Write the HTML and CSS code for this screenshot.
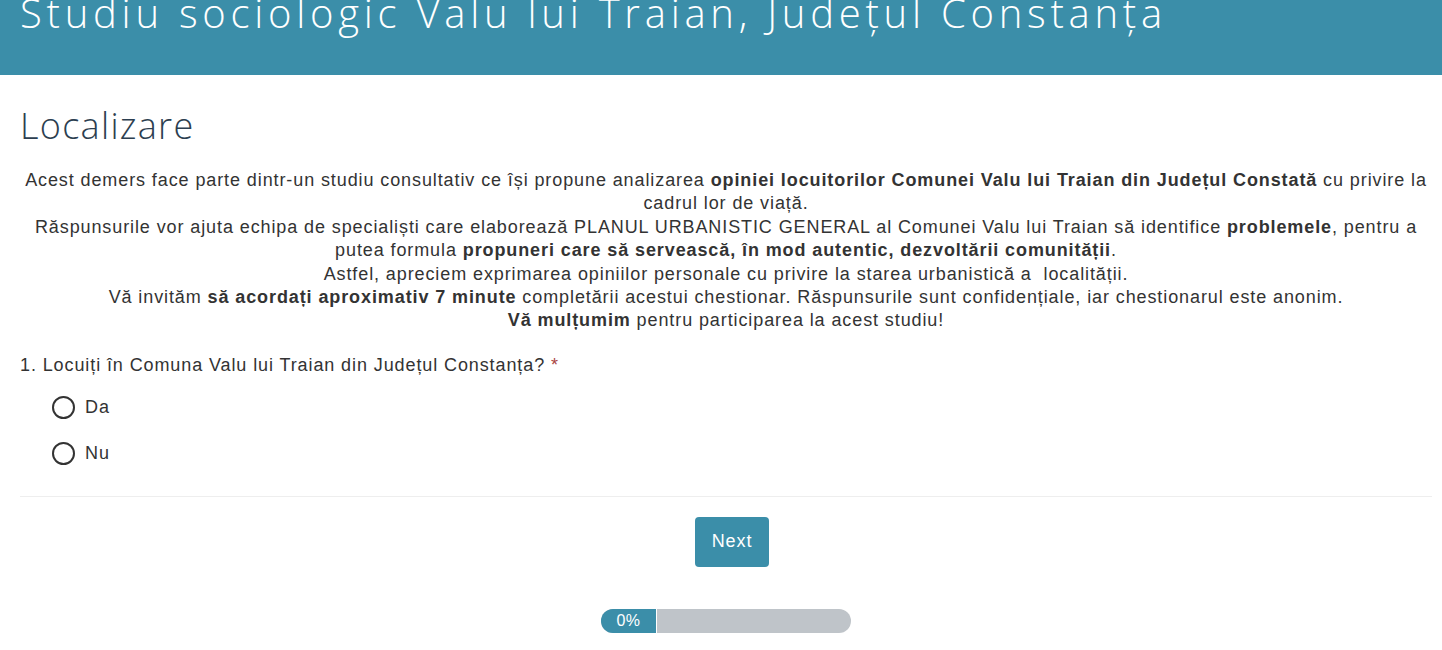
FILE: index.html
```html
<!DOCTYPE html>
<html lang="ro">
<head>
  <meta charset="UTF-8">
  <title>Studiu sociologic Valu lui Traian</title>
  <link rel="stylesheet" href="styles.css">
</head>
<body>
  <header class="site-header">
    <h1>Studiu sociologic Valu lui Traian, Județul Constanța</h1>
  </header>

  <main class="page">
    <h2 class="page-title">Localizare</h2>

    <p class="intro">
      Acest demers face parte dintr-un studiu consultativ ce își propune analizarea <strong>opiniei locuitorilor Comunei Valu lui Traian din Județul Constată</strong> cu privire la cadrul lor de viață.<br>
      Răspunsurile vor ajuta echipa de specialiști care elaborează PLANUL URBANISTIC GENERAL al Comunei Valu lui Traian să identifice <strong>problemele</strong>, pentru a putea formula <strong>propuneri care să servească, în mod autentic, dezvoltării comunității</strong>.<br>
      Astfel, apreciem exprimarea opiniilor personale cu privire la starea urbanistică a &nbsp;localității.<br>
      Vă invităm <strong>să acordați aproximativ 7 minute</strong> completării acestui chestionar. Răspunsurile sunt confidențiale, iar chestionarul este anonim.<br>
      <strong>Vă mulțumim</strong> pentru participarea la acest studiu!
    </p>

    <form class="question">
      <p class="question-title">1. Locuiți în Comuna Valu lui Traian din Județul Constanța? <span class="required">*</span></p>

      <label class="option">
        <input type="radio" name="locuiti" value="da">
        <span>Da</span>
      </label>
      <label class="option">
        <input type="radio" name="locuiti" value="nu">
        <span>Nu</span>
      </label>
    </form>

    <hr class="divider">

    <div class="actions">
      <button type="button" class="btn-next">Next</button>
    </div>

    <div class="progress">
      <div class="progress-bar" style="width: 55px;">0%</div>
    </div>
  </main>
</body>
</html>
```

FILE: styles.css
```css
body {
  margin: 0;
  font-family: "Liberation Sans", Arial, sans-serif;
  color: #333;
  background-color: #fff;
}

.site-header {
  background-color: #3b8ea9;
  height: 75px;
  padding: 0 20px;
  overflow: hidden;
}

.site-header h1 {
  margin: -11px 0 0;
  font-family: "Open Sans", sans-serif;
  font-weight: 300;
  font-size: 40px;
  line-height: 48px;
  letter-spacing: 4.75px;
  color: #fff;
  white-space: nowrap;
}

.page {
  padding: 0 10px 0 20px;
}

.page-title {
  margin: 29px 0 21px;
  font-family: "Open Sans", sans-serif;
  font-weight: 300;
  font-size: 36px;
  line-height: 44px;
  letter-spacing: 1.3px;
  color: #2c3e50;
}

.intro {
  margin: 0;
  text-align: center;
  font-size: 18px;
  line-height: 23.4px;
  letter-spacing: 0.9px;
}

.question {
  margin-top: 19px;
  letter-spacing: 0.9px;
}

.question-title {
  margin: 0 0 7px;
  font-size: 18px;
  line-height: 26px;
}

.required {
  color: #a94442;
}

.option {
  display: flex;
  align-items: center;
  gap: 10px;
  margin-left: 32px;
  height: 46px;
  font-size: 18px;
  cursor: pointer;
}

.option input {
  appearance: none;
  -webkit-appearance: none;
  margin: 0;
  width: 23px;
  height: 23px;
  border: 2px solid #333;
  border-radius: 50%;
  box-sizing: border-box;
}

.divider {
  margin: 19px 0 20px;
  border: none;
  border-top: 1px solid #eee;
}

.actions {
  display: flex;
  justify-content: center;
}

.btn-next {
  margin-left: 12px;
  padding: 0 17px;
  height: 50px;
  background-color: #3b8ea9;
  color: #fff;
  border: none;
  border-radius: 4px;
  font-family: "Liberation Sans", Arial, sans-serif;
  font-size: 18px;
  letter-spacing: 0.9px;
  cursor: pointer;
}

.progress {
  margin: 42px auto 0;
  width: 250px;
  height: 24px;
  border-radius: 12px;
  background-color: #bfc4c9;
  overflow: hidden;
}

.progress-bar {
  height: 100%;
  background-color: #3b8ea9;
  border-right: 1px solid #fff;
  color: #fff;
  font-size: 16px;
  line-height: 24px;
  letter-spacing: 0.5px;
  text-align: center;
}
```
